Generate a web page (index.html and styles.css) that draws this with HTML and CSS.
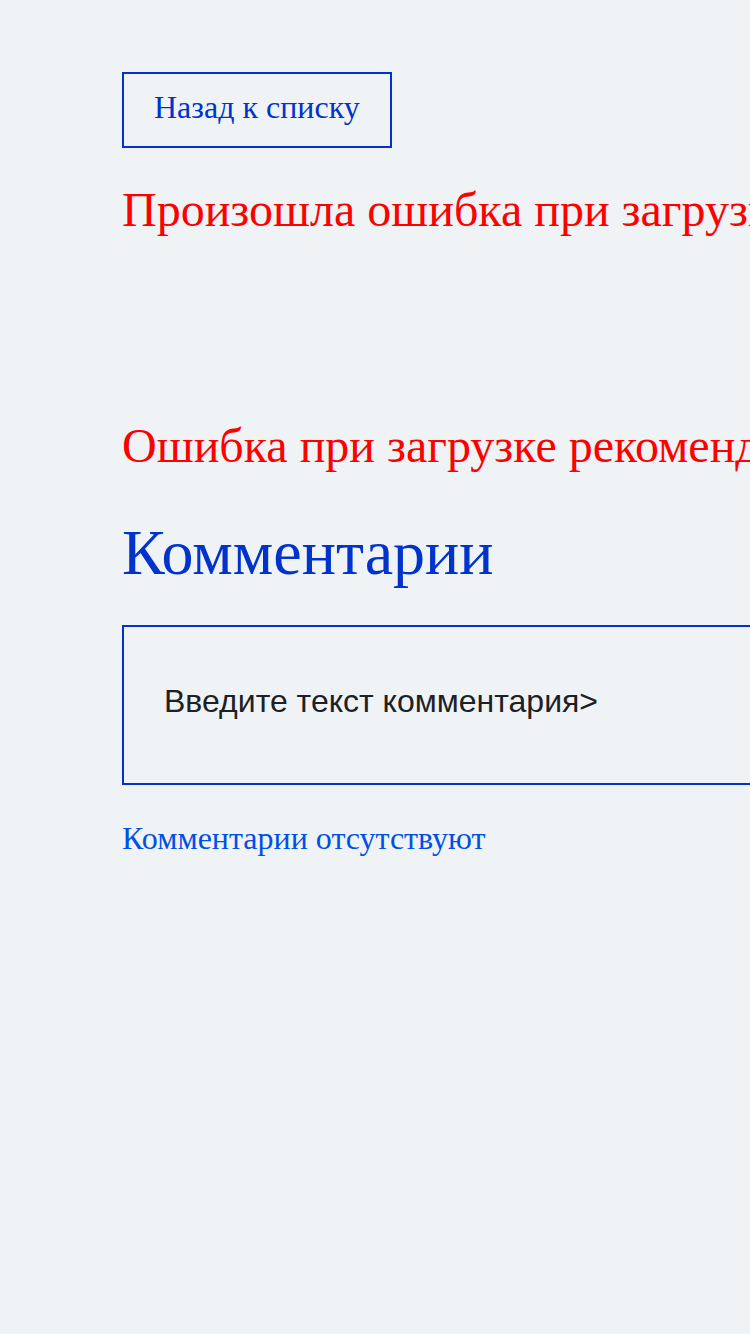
FILE: index.html
```html
<!DOCTYPE html>
<html lang="ru">
<head>
<meta charset="utf-8">
<link rel="stylesheet" href="styles.css">
</head>
<body>
<main class="page">
  <button class="back">Назад к списку</button>
  <p class="error error-main">Произошла ошибка при загрузке статьи</p>
  <div class="spacer"></div>
  <p class="error error-rec">Ошибка при загрузке рекомендаций</p>
  <h2 class="title">Комментарии</h2>
  <div class="comment-input">Введите текст комментария&gt;</div>
  <p class="empty">Комментарии отсутствуют</p>
</main>
</body>
</html>
```

FILE: styles.css
```css
html, body {
  margin: 0;
  padding: 0;
  background: #eff3f6;
  overflow-x: hidden;
}
body {
  font-family: "Liberation Serif", "Times New Roman", serif;
  min-height: 1334px;
}
.page {
  padding: 72px 0 0 122px;
  width: 900px;
  display: flex;
  flex-direction: column;
  align-items: flex-start;
}
.back {
  box-sizing: border-box;
  height: 76px;
  padding: 0 30px 6px;
  border: 2px solid #0033cc;
  background: transparent;
  color: #0033cc;
  font-family: "Liberation Serif", serif;
  font-size: 32px;
  margin: 0;
}
.error {
  margin: 0;
  color: #ff0000;
  font-size: 48px;
  line-height: 1.2;
  white-space: nowrap;
}
.error-main {
  margin-top: 33px;
}
.spacer {
  height: 178px;
}
.title {
  margin: 41px 0 0;
  color: #0033cc;
  font-weight: normal;
  font-size: 64px;
  line-height: 1.2;
}
.comment-input {
  box-sizing: border-box;
  margin-top: 33px;
  width: 800px;
  height: 160px;
  border: 2px solid #0033cc;
  padding: 0 40px 6px;
  display: flex;
  align-items: center;
  font-family: "Liberation Sans", Arial, sans-serif;
  font-size: 32px;
  color: #1d2125;
}
.empty {
  margin: 34px 0 0;
  color: #0050e6;
  font-size: 32px;
  line-height: 1.2;
}
```
